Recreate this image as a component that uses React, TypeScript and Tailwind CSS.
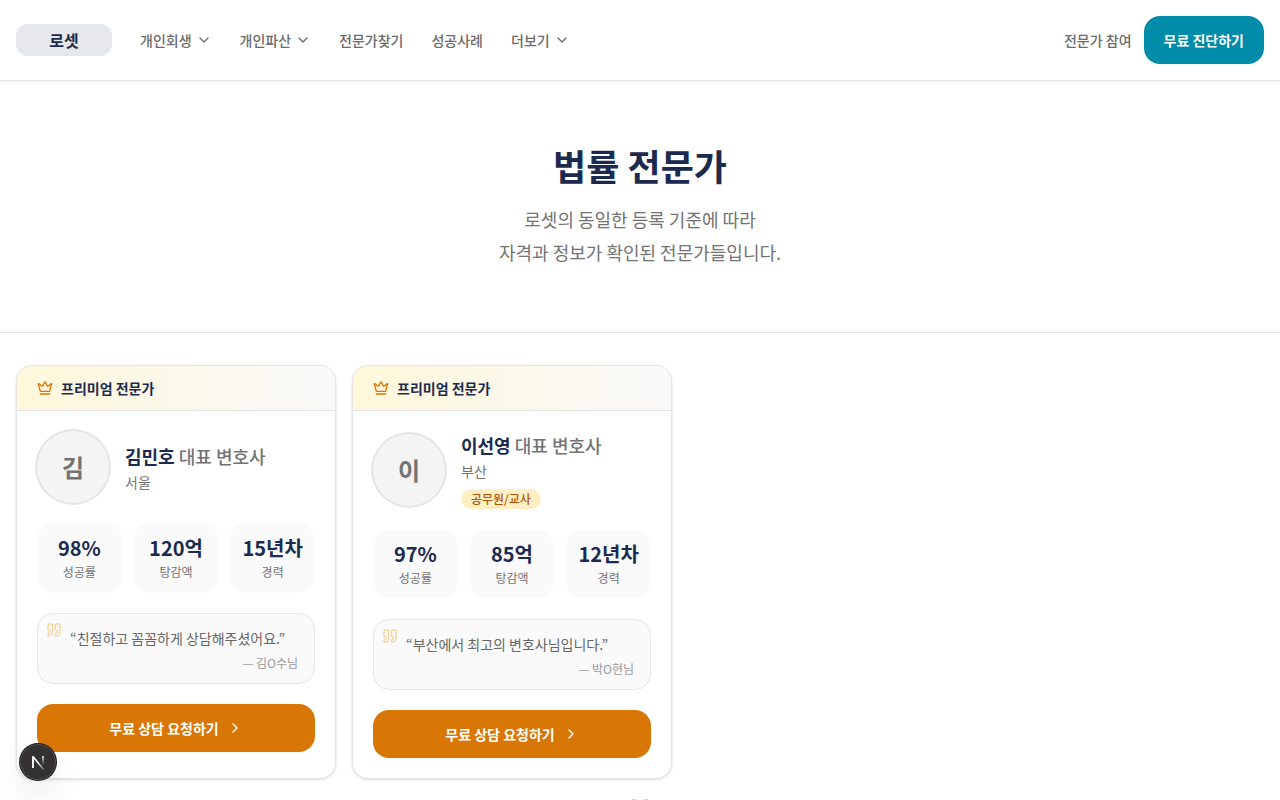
import React from 'react';
import { ChevronDown, ChevronRight, Crown, Quote } from 'lucide-react';

interface Expert {
  name: string;
  region: string;
  badge?: string;
  stats: { value: string; label: string }[];
  review: string;
  reviewer: string;
}

const experts: Expert[] = [
  {
    name: '김민호',
    region: '서울',
    stats: [
      { value: '98%', label: '성공률' },
      { value: '120억', label: '탕감액' },
      { value: '15년차', label: '경력' },
    ],
    review: '친절하고 꼼꼼하게 상담해주셨어요.',
    reviewer: '김O수님',
  },
  {
    name: '이선영',
    region: '부산',
    badge: '공무원/교사',
    stats: [
      { value: '97%', label: '성공률' },
      { value: '85억', label: '탕감액' },
      { value: '12년차', label: '경력' },
    ],
    review: '부산에서 최고의 변호사님입니다.',
    reviewer: '박O현님',
  },
];

const navItems = [
  { label: '개인회생', menu: true },
  { label: '개인파산', menu: true },
  { label: '전문가찾기', menu: false },
  { label: '성공사례', menu: false },
  { label: '더보기', menu: true },
];

const Header: React.FC = () => (
  <header className="border-b border-[#e5e5e5] bg-white px-4 shadow-[0_1px_2px_rgba(0,0,0,0.06)]">
    <div className="flex h-20 items-center justify-between">
      <div className="flex items-center gap-7">
        <a href="#" className="flex h-8 w-24 items-center justify-center rounded-xl bg-[#e7e8ec] text-base font-bold text-[#1b2a4e]">
          로셋
        </a>
        <nav className="flex items-center gap-7 text-sm font-medium text-[#6b6b6b]">
          {navItems.map((item) =>
            item.menu ? (
              <button key={item.label} type="button" className="flex items-center gap-1">
                {item.label}
                <ChevronDown className="h-4 w-4" />
              </button>
            ) : (
              <a key={item.label} href="#">{item.label}</a>
            )
          )}
        </nav>
      </div>
      <div className="flex items-center gap-3 text-sm">
        <a href="#" className="font-medium text-[#6b6b6b]">전문가 참여</a>
        <button type="button" className="h-12 rounded-2xl bg-[#008ba8] px-5 font-bold text-white">
          무료 진단하기
        </button>
      </div>
    </div>
  </header>
);

const ExpertCard: React.FC<{ expert: Expert }> = ({ expert }) => (
  <article className="w-80 overflow-hidden rounded-2xl border border-[#e5e5e5] bg-white shadow-[0_1px_3px_rgba(0,0,0,0.14)]">
    <div className="flex h-[45px] items-center gap-2 border-b border-[#e2e2e4] bg-gradient-to-r from-[#fef7da] to-[#fafafa] px-5">
      <Crown className="h-4 w-4 text-[#d97706]" />
      <span className="text-sm font-semibold text-[#1b2a4e]">프리미엄 전문가</span>
    </div>

    <div className="flex flex-col gap-5 p-5">
      <div className="flex items-center gap-4">
        <div className="flex h-18 w-18 shrink-0 items-center justify-center rounded-full bg-[#f4f4f4] text-2xl font-bold text-[#737373] ring-2 ring-[#e5e5e5]">
          {expert.name[0]}
        </div>
        <div>
          <h3 className="text-lg/7 font-bold text-[#1b2a4e]">
            {expert.name} <span className="font-medium text-[#737373]">대표 변호사</span>
          </h3>
          <p className="mt-0.5 text-sm text-[#737373]">{expert.region}</p>
          {expert.badge && (
            <span className="mt-2 flex h-5 w-fit items-center rounded-full bg-[#fef0c3] px-2.5 text-xs font-medium text-[#b45309]">
              {expert.badge}
            </span>
          )}
        </div>
      </div>

      <dl className="grid grid-cols-3 gap-3 text-center">
        {expert.stats.map((stat) => (
          <div key={stat.label} className="flex flex-col-reverse rounded-2xl border border-[#fdfdfd] bg-[#fafafa] py-2.5">
            <dt className="text-xs/5 text-[#737373]">{stat.label}</dt>
            <dd className="text-xl/7 font-bold text-[#1b2a4e]">{stat.value}</dd>
          </div>
        ))}
      </dl>

      <blockquote className="relative rounded-2xl border border-[#e5e5e5] bg-[#fafafa] pt-[13px] pr-4 pb-[11px] pl-8">
        <Quote className="absolute top-2 left-2 h-4 w-4 text-[#f59e0b] opacity-40" />
        <p className="text-sm/[23px] text-[#666666]">“{expert.review}”</p>
        <footer className="mt-1 text-right text-xs/[18px] text-[#999999]">— {expert.reviewer}</footer>
      </blockquote>

      <button
        type="button"
        className="flex h-12 items-center justify-center gap-2 rounded-2xl bg-[#d97706] text-sm font-semibold text-white"
      >
        무료 상담 요청하기
        <ChevronRight className="h-4 w-4" />
      </button>
    </div>
  </article>
);

const DevBadge: React.FC = () => (
  <button
    type="button"
    aria-label="Next.js"
    className="fixed bottom-5 left-5 flex h-9 w-9 items-center justify-center rounded-full bg-[#333131] shadow-[0_0_0_1px_#171717,inset_0_0_0_1px_rgba(255,255,255,0.14),0_16px_32px_-8px_rgba(0,0,0,0.24)]"
  >
    <svg width="40" height="40" viewBox="0 0 40 40" fill="none" className="shrink-0">
      <defs>
        <linearGradient id="diagonal" x1="20" y1="20" x2="26" y2="28" gradientUnits="userSpaceOnUse">
          <stop stopColor="white" />
          <stop offset="1" stopColor="white" stopOpacity="0.2" />
        </linearGradient>
        <linearGradient id="stem" x1="25" y1="14" x2="25" y2="23" gradientUnits="userSpaceOnUse">
          <stop stopColor="white" />
          <stop offset="1" stopColor="white" stopOpacity="0" />
        </linearGradient>
      </defs>
      <path d="M15 26V14.5L25.5 27.5" stroke="url(#diagonal)" strokeWidth="1.6" strokeLinejoin="bevel" />
      <path d="M15 26V14.5" stroke="white" strokeWidth="1.6" />
      <path d="M25 14V23.5" stroke="url(#stem)" strokeWidth="1.6" />
    </svg>
  </button>
);

export default function App() {
  return (
    <div className="bg-white font-['Noto_Sans_CJK_KR',sans-serif]">
      <Header />
      <main>
        <section className="border-b border-[#e5e5e5] px-4 pt-16 pb-[63px] text-center">
          <h1 className="text-4xl font-bold text-[#1b2a4e]">법률 전문가</h1>
          <p className="mt-[18px] text-lg/[33px] text-[#737373]">
            로셋의 동일한 등록 기준에 따라
            <br />
            자격과 정보가 확인된 전문가들입니다.
          </p>
        </section>
        <section className="flex flex-wrap gap-4 px-4 pt-8 pb-5">
          {experts.map((expert) => (
            <ExpertCard key={expert.name} expert={expert} />
          ))}
        </section>
        <svg width="16" height="1" className="mx-auto block" fill="#d4d4d4">
          <rect width="4" height="1" />
          <rect x="12" width="4" height="1" />
        </svg>
      </main>
      <DevBadge />
    </div>
  );
}
